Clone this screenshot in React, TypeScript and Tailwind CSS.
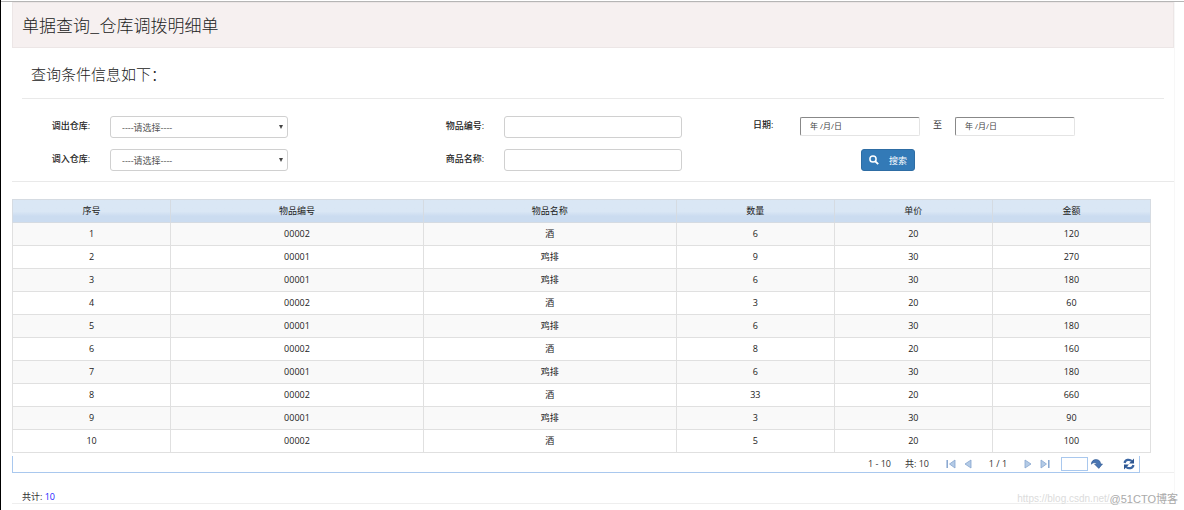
import { Fragment } from "react"
import type { ReactNode } from "react"

type Row = {
  code: string
  name: string
  qty: number
  price: number
  amount: number
}

const rows: Row[] = [
  { code: "00002", name: "酒", qty: 6, price: 20, amount: 120 },
  { code: "00001", name: "鸡排", qty: 9, price: 30, amount: 270 },
  { code: "00001", name: "鸡排", qty: 6, price: 30, amount: 180 },
  { code: "00002", name: "酒", qty: 3, price: 20, amount: 60 },
  { code: "00001", name: "鸡排", qty: 6, price: 30, amount: 180 },
  { code: "00002", name: "酒", qty: 8, price: 20, amount: 160 },
  { code: "00001", name: "鸡排", qty: 6, price: 30, amount: 180 },
  { code: "00002", name: "酒", qty: 33, price: 20, amount: 660 },
  { code: "00001", name: "鸡排", qty: 3, price: 30, amount: 90 },
  { code: "00002", name: "酒", qty: 5, price: 20, amount: 100 },
]

const columns = [
  { title: "序号", width: "w-5/36" },
  { title: "物品编号", width: "w-8/36" },
  { title: "物品名称", width: "w-8/36" },
  { title: "数量", width: "w-5/36" },
  { title: "单价", width: "w-5/36" },
  { title: "金额", width: "w-5/36" },
]

export default function App() {
  return (
    <div className="relative min-h-screen overflow-hidden border-l border-black bg-white font-['Open_Sans','Noto_Sans_CJK_SC',sans-serif] text-[9px] leading-3 text-[#333]">
      <div className="h-[2px] border-b border-[#b5b5b5]" />
      <div className="mr-[9px] ml-[11px] border-r border-[#f7f7f7]">
        <header className="flex h-[46px] items-center border border-[#ece6e6] bg-[#f6f0f0] px-[9px]">
          <h1 className="font-['Noto_Sans_CJK_SC',sans-serif] text-[17px] leading-6 font-light text-[#222]">
            单据查询_仓库调拨明细单
          </h1>
        </header>
        <SearchForm />
        <DataTable />
        <Pager />
        <p className="mt-[18px] border-b border-[#eee] px-[10px]">
          共计: <span className="text-[#2020ff]">10</span>
        </p>
      </div>
      <div className="absolute right-[6px] bottom-[5px] flex items-center font-['Liberation_Sans','Noto_Sans_CJK_SC',sans-serif] text-[10px] leading-3">
        <span className="text-[#dcdcdc]">https://blog.csdn.net/</span>
        <span className="text-[11px] text-[#aaa]">@51CTO博客</span>
      </div>
    </div>
  )
}

function SearchForm() {
  return (
    <form className="border-b border-[#e9e9e9] pb-[10px]" onSubmit={(e) => e.preventDefault()}>
      <h2 className="mx-[10px] h-[51px] border-b border-[#e9e9e9] px-[9px] pt-[16px] text-[15px] leading-5 font-light text-[#222]">
        查询条件信息如下：
      </h2>
      <div className="grid grid-cols-[394fr_347fr_421fr] gap-y-[11px] pt-[17px]">
        <Field id="from" label="调出仓库:">
          <WarehouseSelect id="from" />
        </Field>
        <Field id="code" label="物品编号:">
          <TextInput id="code" />
        </Field>
        <DateRange />
        <Field id="to" label="调入仓库:">
          <WarehouseSelect id="to" />
        </Field>
        <Field id="name" label="商品名称:">
          <TextInput id="name" />
        </Field>
        <div className="pl-[108px]">
          <button type="submit" className="flex h-[22px] w-[54px] items-center justify-between rounded-[3px] border border-[#2e6da4] bg-[#337ab7] px-[7px] text-white">
            <svg viewBox="0 0 10 10" className="size-[10px]" fill="none" stroke="currentColor">
              <circle cx="4" cy="4" r="3.1" strokeWidth="1.5" />
              <path d="M6.3 6.3L9.2 9.2" strokeWidth="1.9" />
            </svg>
            <span className="pt-[2px]">搜索</span>
          </button>
        </div>
      </div>
    </form>
  )
}

function Field({ id, label, children }: { id: string; label: string; children: ReactNode }) {
  return (
    <div className="flex items-center">
      <label htmlFor={id} className="w-[98px] pr-[20px] pb-[2px] text-right font-medium whitespace-nowrap text-[#222]">
        {label}
      </label>
      {children}
    </div>
  )
}

function TextInput({ id }: { id: string }) {
  return <input id={id} className="h-[22px] w-[178px] rounded-[3px] border border-[#d0d0d0] px-2" />
}

function WarehouseSelect({ id }: { id: string }) {
  return (
    <div className="relative">
      <select id={id} className="h-[22px] w-[178px] appearance-none rounded-[3px] border border-[#d0d0d0] bg-white px-[11px] pt-[2px] text-[#555]">
        <option>----请选择----</option>
      </select>
      <svg viewBox="0 0 4 4" className="pointer-events-none absolute top-[9px] right-[5px] size-[4px]">
        <path d="M0 0h4L2 4z" fill="#444" />
      </svg>
    </div>
  )
}

function DateRange() {
  const ends = [
    { id: "start", label: "日期:", style: "w-[47px] pb-[2px] font-medium text-[#222]" },
    { id: "end", label: "至", style: "w-[35px] pb-[2px] text-center" },
  ]
  return (
    <div className="flex items-center pb-[2px]">
      {ends.map((end) => (
        <Fragment key={end.id}>
          <label htmlFor={end.id} className={end.style}>
            {end.label}
          </label>
          <input
            id={end.id}
            placeholder="年 /月/日"
            className="h-[19px] w-[120px] rounded-[2px] border border-t-[#888] border-r-[#e4e4e4] border-b-[#e4e4e4] border-l-[#888] px-[9px] pb-px text-[8px] placeholder:text-[#444]"
          />
        </Fragment>
      ))}
    </div>
  )
}

function DataTable() {
  return (
    <div className="pt-[17px] pr-[23px]">
      <table className="w-full table-fixed border-collapse text-center text-[#222]">
        <thead>
          <tr className="h-[23px] bg-linear-to-b from-[#dae7f5] from-50% to-[#cbdcf0] to-70%">
            {columns.map((col) => (
              <th key={col.title} className={`${col.width} border border-[#d5dbe2] font-normal`}>
                {col.title}
              </th>
            ))}
          </tr>
        </thead>
        <tbody>
          {rows.map((row, index) => (
            <tr key={index} className="h-[23px] odd:bg-[#f9f9f9]">
              {[index + 1, row.code, row.name, row.qty, row.price, row.amount].map((cell, i) => (
                <td key={i} className="border border-[#e0e0e0]">{cell}</td>
              ))}
            </tr>
          ))}
        </tbody>
      </table>
    </div>
  )
}

function Pager() {
  return (
    <div className="flex pt-[3px]">
      <div className="flex h-[17px] flex-1 items-center justify-end border border-t-0 border-[#a9c8ee] pr-[4px]">
        <span className="mr-[14px]">1 - 10</span>
        <span className="mr-[17px]">共: 10</span>
        <PageButton label="首页">
          <path d="M1.2 1v8" strokeWidth="1.5" />
          <path d="M9 1v8L3.5 5z" />
        </PageButton>
        <span className="w-[7px]" />
        <PageButton label="上一页">
          <path d="M8 1v8L2 5z" />
        </PageButton>
        <span className="w-[50px] text-center">1 / 1</span>
        <PageButton label="下一页">
          <path d="M2 1v8l6-4z" />
        </PageButton>
        <span className="w-[7px]" />
        <PageButton label="末页">
          <path d="M1 1v8l5.5-4z" />
          <path d="M8.8 1v8" strokeWidth="1.5" />
        </PageButton>
        <input aria-label="页码" className="ml-[11px] h-[14px] w-[27px] border border-[#a9c8ee] px-1" />
        <button type="button" aria-label="跳转" className="ml-[3px]">
          <svg viewBox="0 0 12 10" className="h-[10px] w-[12px]">
            <path d="M0.4 5.2C0.4 1.8 3 0.4 5.5 0.6C8 0.8 9.5 2.4 9.6 5H11.5L7.8 9.4L3.6 5.2H5.8C5.3 3.4 2.4 3 0.4 5.2Z" fill="#4a76b3" stroke="#2c5590" strokeWidth="0.6" />
          </svg>
        </button>
        <button type="button" aria-label="刷新" className="ml-[20px]">
          <svg viewBox="0 0 12 12" className="size-[12px]" fill="none" stroke="#3b66a3" strokeWidth="2.2">
            <path d="M1.6 5C2 1.6 6.5 0.9 8.8 3" />
            <path d="M10.4 7C10 10.4 5.5 11.1 3.2 9" />
            <path d="M11 0.5v5H6zM1 11.5v-5h5z" fill="#2c5590" stroke="none" />
          </svg>
        </button>
      </div>
      <div className="w-[34px] border-b border-[#eee]" />
    </div>
  )
}

function PageButton({ label, children }: { label: string; children: ReactNode }) {
  return (
    <button type="button" aria-label={label}>
      <svg viewBox="0 0 10 10" className="size-[10px]" fill="#b4cbe6" stroke="#86a5cf" strokeWidth="0.8">
        {children}
      </svg>
    </button>
  )
}
